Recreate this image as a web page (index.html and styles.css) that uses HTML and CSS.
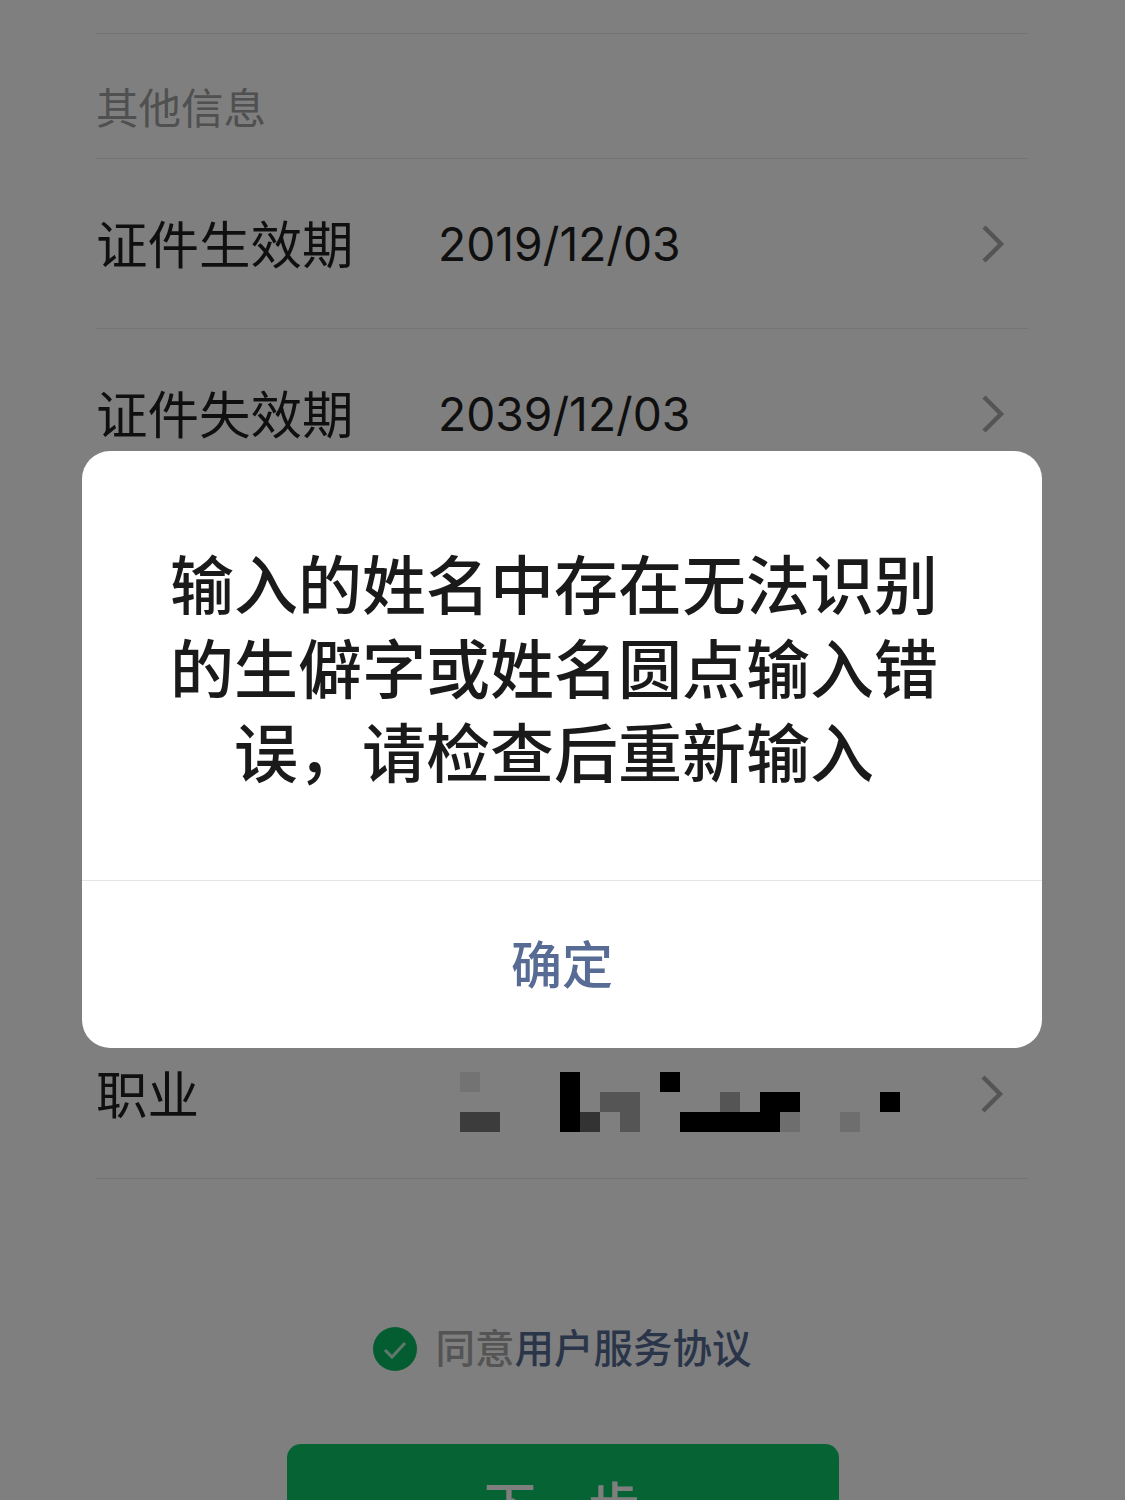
FILE: index.html
```html
<!DOCTYPE html>
<html lang="zh-CN">
<head>
<meta charset="utf-8">
<title>其他信息</title>
<link rel="stylesheet" href="styles.css">
</head>
<body>
<main class="page">
  <form class="form">
    <h2 class="section-title">其他信息</h2>
    <div class="row">
      <span class="label">证件生效期</span>
      <span class="value">2019/12/03</span>
      <svg class="chevron" viewBox="0 0 24 40"><path d="M3 3 L20 20 L3 37"/></svg>
    </div>
    <div class="row">
      <span class="label">证件失效期</span>
      <span class="value">2039/12/03</span>
      <svg class="chevron" viewBox="0 0 24 40"><path d="M3 3 L20 20 L3 37"/></svg>
    </div>
    <div class="row"></div>
    <div class="row"></div>
    <div class="row"></div>
    <div class="row">
      <span class="label">职业</span>
      <svg class="mosaic" viewBox="0 0 440 60" shape-rendering="crispEdges">
        <rect x="0" y="0" width="20" height="20" fill="#e6e6e6"/>
        <rect x="0" y="40" width="40" height="20" fill="#787878"/>
        <rect x="100" y="0" width="20" height="60" fill="#000"/>
        <rect x="120" y="40" width="20" height="20" fill="#666"/>
        <rect x="140" y="20" width="40" height="20" fill="#aaa"/>
        <rect x="160" y="40" width="20" height="20" fill="#aaa"/>
        <rect x="200" y="0" width="20" height="20" fill="#000"/>
        <rect x="260" y="20" width="20" height="20" fill="#aaa"/>
        <rect x="300" y="20" width="40" height="20" fill="#000"/>
        <rect x="220" y="40" width="100" height="20" fill="#000"/>
        <rect x="320" y="40" width="20" height="20" fill="#dcdcdc"/>
        <rect x="380" y="40" width="20" height="20" fill="#dcdcdc"/>
        <rect x="420" y="20" width="20" height="20" fill="#000"/>
      </svg>
      <svg class="chevron" viewBox="0 0 24 40"><path d="M3 3 L20 20 L3 37"/></svg>
    </div>
    <div class="agreement">
      <svg class="check" viewBox="0 0 44 44"><circle cx="22" cy="22" r="22"/><path d="M12 23 L19 30 L32 16"/></svg>
      <span class="agree-text">同意<a class="agree-link">用户服务协议</a></span>
    </div>
    <button class="next" type="button">下一步</button>
  </form>
</main>
<div class="mask">
  <div class="dialog">
    <div class="dialog-body">输入的姓名中存在无法识别的生僻字或姓名圆点输入错误，请检查后重新输入</div>
    <div class="dialog-footer">确定</div>
  </div>
</div>
</body>
</html>
```
FILE: styles.css
```css
* { box-sizing: border-box; }
html, body { margin: 0; height: 1500px; overflow: hidden; }
body {
  position: relative;
  background: #fff;
  font-family: "Noto Sans CJK SC", "Noto Sans", sans-serif;
  color: #1e1e1e;
}
.page { padding: 33px 97px 0 96px; }
.form { border-top: 1px solid #e8e8e8; }
.section-title {
  margin: 0;
  height: 125px;
  padding: 44px 0 0 0;
  font-size: 42.5px;
  line-height: 56px;
  font-weight: 400;
  color: #a0a0a0;
  border-bottom: 1px solid #e8e8e8;
}
.row {
  display: flex;
  align-items: center;
  height: 170px;
  padding: 0 23px 0 0;
  border-bottom: 1px solid #e8e8e8;
}
.label {
  width: 342px;
  padding-bottom: 4px;
  font-size: 51.5px;
  line-height: 70px;
  flex: none;
}
.value {
  flex: 1;
  font-family: "Inter", "Noto Sans", sans-serif;
  font-size: 46.2px;
  line-height: 70px;
}
.chevron {
  flex: none;
  width: 24px;
  height: 40px;
  fill: none;
  stroke: #ababab;
  stroke-width: 4.5;
}
.mosaic {
  flex: none;
  width: 440px;
  height: 60px;
  margin: 16px 80px 0 22px;
}
.agreement {
  display: flex;
  align-items: center;
  justify-content: center;
  gap: 19px;
  margin-top: 148px;
  height: 44px;
}
.check { width: 44px; height: 44px; flex: none; }
.check circle { fill: #09bb63; }
.check path { fill: none; stroke: #fff; stroke-width: 3; opacity: .75; }
.agree-text {
  padding-bottom: 6px;
  font-size: 39.5px;
  line-height: 44px;
  font-weight: 500;
  color: #a8a8a8;
}
.agree-link { color: #576b95; }
.next {
  display: block;
  width: 552px;
  height: 118px;
  margin: 73px 0 0 191px;
  padding: 0 2px 0 0;
  border: 0;
  border-radius: 14px;
  background: #0cc868;
  color: #fff;
  font-family: inherit;
  font-size: 52px;
  font-weight: 500;
}
.mask {
  position: absolute;
  inset: 0;
  display: flex;
  align-items: center;
  justify-content: center;
  padding: 0 1px 1px 0;
  background: rgba(0, 0, 0, .5);
}
.dialog {
  width: 960px;
  height: 597px;
  background: #fff;
  border-radius: 28px;
  overflow: hidden;
}
.dialog-body {
  height: 430px;
  padding: 88px 100px 0 84px;
  font-size: 64px;
  line-height: 84px;
  font-weight: 500;
  text-align: center;
  color: #1a1a1a;
  border-bottom: 1px solid #e4e4e4;
}
.dialog-footer {
  height: 167px;
  padding-bottom: 5px;
  display: flex;
  align-items: center;
  justify-content: center;
  font-size: 51px;
  font-weight: 500;
  color: #576b95;
}
```
